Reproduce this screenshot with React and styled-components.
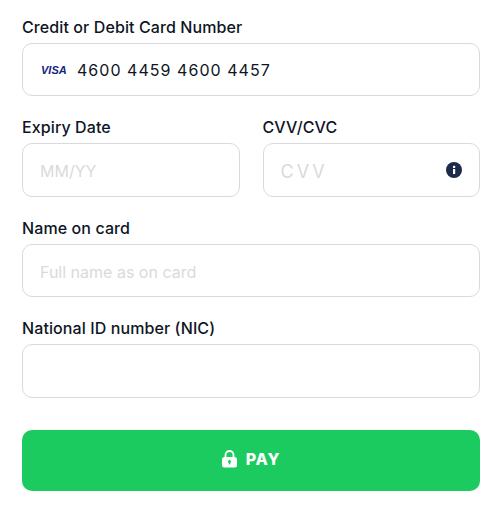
import React from "react";
import styled, { createGlobalStyle } from "styled-components";

const Global = createGlobalStyle`
  html, body { margin: 0; padding: 0; background: #fff; }
  body { font-family: Inter, "Liberation Sans", sans-serif; }
  * { box-sizing: border-box; }
`;

const Form = styled.form`
  width: 503px;
  height: 512px;
  padding: 16.8px 23px 0 22px;
  display: flex;
  flex-direction: column;
`;

const Row = styled.div`
  display: flex;
  flex: none;
  gap: 23px;
  margin-top: ${(p) => p.$top || 0}px;
`;

const Field = styled.div`
  display: flex;
  flex-direction: column;
  flex: ${(p) => (p.$half ? "1 1 0" : "none")};
  margin-top: ${(p) => p.$top || 0}px;
`;

const Label = styled.label`
  font-size: 16px;
  line-height: 20px;
  font-weight: 500;
  letter-spacing: 0.1px;
  color: #0e1525;
  margin-bottom: 6px;
`;

const InputBox = styled.div`
  height: 53.5px;
  border: 1px solid #d8dadd;
  border-radius: 10px;
  display: flex;
  align-items: center;
  padding: 0 17px;
  background: #fff;
`;

const Placeholder = styled.span`
  font-size: ${(p) => p.$size || 16}px;
  color: #d9dadc;
  letter-spacing: ${(p) => p.$spacing || 0}px;
  transform: translateY(0.5px);
`;

const CardNumber = styled.span`
  font-size: 16px;
  color: #0e1525;
  letter-spacing: 1.03px;
  margin-left: 10px;
`;

const VisaMark = styled.span`
  font-family: "Liberation Sans", sans-serif;
  font-size: 11px;
  font-weight: 700;
  font-style: italic;
  color: #14237f;
  width: 26px;
  margin-left: 1px;
`;

const InfoIcon = styled.svg`
  margin-left: auto;
`;

const PayButton = styled.button`
  flex: none;
  height: 61px;
  margin-top: 32px;
  padding: 0 0 3px;
  border: 0;
  border-radius: 10px;
  background: #1bcb60;
  color: #fff;
  display: flex;
  align-items: center;
  justify-content: center;
  gap: 9px;
  font-family: inherit;
  font-size: 16px;
  font-weight: 800;
  letter-spacing: 0.8px;
`;

export default function App() {
  return (
    <>
      <Global />
      <Form>
        <Field>
          <Label>Credit or Debit Card Number</Label>
          <InputBox>
            <VisaMark>VISA</VisaMark>
            <CardNumber>4600 4459 4600 4457</CardNumber>
          </InputBox>
        </Field>
        <Row $top={21}>
          <Field $half>
            <Label>Expiry Date</Label>
            <InputBox>
              <Placeholder>MM/YY</Placeholder>
            </InputBox>
          </Field>
          <Field $half>
            <Label>CVV/CVC</Label>
            <InputBox>
              <Placeholder $size={18} $spacing={3}>CVV</Placeholder>
              <InfoIcon width="16" height="16" viewBox="0 0 16 16">
                <circle cx="8" cy="8" r="8" fill="#1c2b4a" />
                <rect x="7" y="7" width="2.2" height="5" fill="#fff" />
                <rect x="7" y="3.8" width="2.2" height="2.2" fill="#fff" />
              </InfoIcon>
            </InputBox>
          </Field>
        </Row>
        <Field $top={21}>
          <Label>Name on card</Label>
          <InputBox>
            <Placeholder>Full name as on card</Placeholder>
          </InputBox>
        </Field>
        <Field $top={21}>
          <Label>National ID number (NIC)</Label>
          <InputBox />
        </Field>
        <PayButton type="button">
          <svg width="15" height="18" viewBox="0 0 15 18">
            <path d="M3.5 8V5a4 4 0 0 1 8 0v3" fill="none" stroke="#fff" strokeWidth="1.8" />
            <rect x="0" y="7" width="15" height="10.5" rx="2.5" fill="#fff" />
            <circle cx="7.5" cy="11.4" r="1.5" fill="#1bcb60" />
            <rect x="6.8" y="11.4" width="1.4" height="3" fill="#1bcb60" />
          </svg>
          PAY
        </PayButton>
      </Form>
    </>
  );
}
